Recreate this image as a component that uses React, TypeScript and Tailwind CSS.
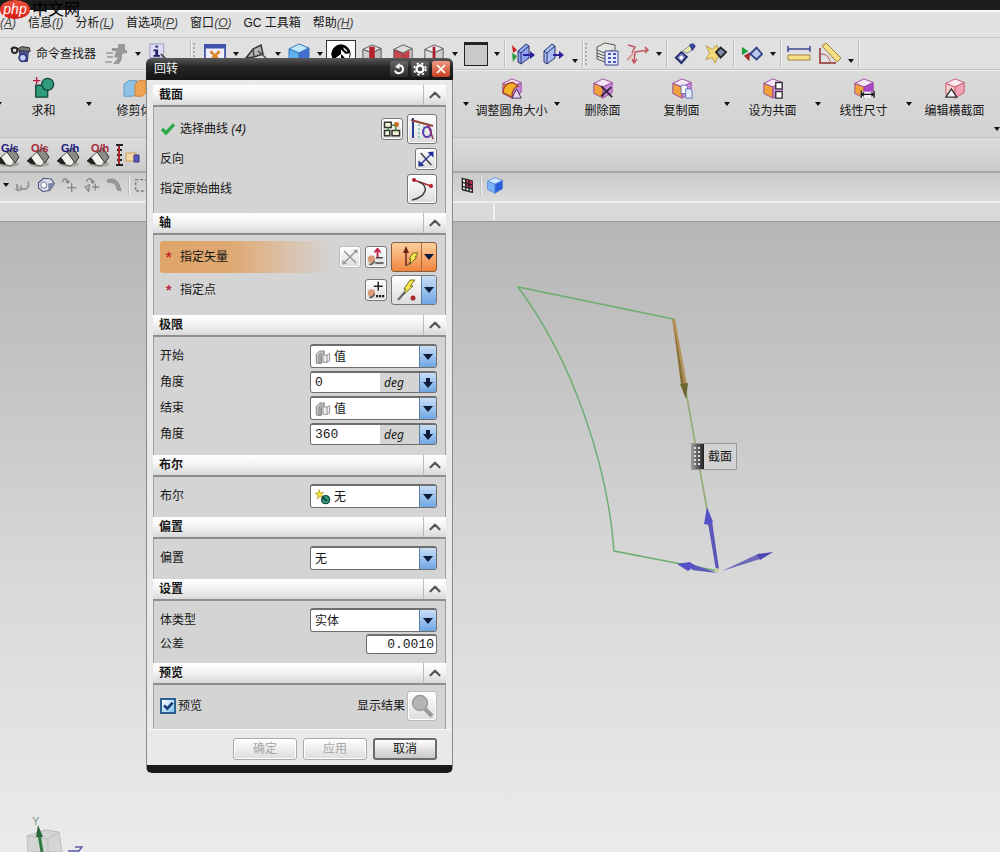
import React, { useState } from 'react';
import clsx from 'clsx';
import { ChevronUp, X } from 'lucide-react';

type Children = { children?: React.ReactNode };

const fonts = 'font-["Liberation_Sans","Noto_Sans_CJK_SC",sans-serif]';
const mono = 'font-["Liberation_Mono","Noto_Sans_CJK_SC",monospace]';

/* ---------- drawings ---------- */

function Svg({ children, className = 'w-[22px] h-[22px]' }: Children & { className?: string }) {
  return (
    <svg viewBox="0 0 24 24" fill="none" aria-hidden="true" className={clsx('shrink-0', className)}>
      {children}
    </svg>
  );
}

interface CubeProps {
  top: string;
  left: string;
  right: string;
  line?: string;
}

function Cube({ top, left, right, line = '#555' }: CubeProps) {
  return (
    <g stroke={line} strokeWidth="1" strokeLinejoin="round">
      <path d="M2 7 12 2 22 6 12 11Z" fill={top} />
      <path d="M2 7 12 11V23L2 18Z" fill={left} />
      <path d="M12 11 22 6V17L12 23Z" fill={right} />
    </g>
  );
}

const Roller = ({ text, color }: { text: string; color: string }) => (
  <svg viewBox="0 0 28 26" aria-hidden="true" className="w-7 h-[26px] shrink-0">
    <ellipse cx="15" cy="22" rx="10" ry="3" fill="#a5a59a" />
    <path d="M3 19 14 9 24 16 17 24 9 22Z" fill="#f2f2ea" stroke="#555" />
    <path d="M13 10 19 6 25 15 21 21Z" fill="#8b8b86" stroke="#333" />
    <path d="M3 19 7 15 12 22H7Z" fill="#222" />
    <text x="7" y="10" fontSize="11" fontWeight="bold" fill={color}>{text}</text>
  </svg>
);

const ValueIcon = () => (
  <Svg className="w-4 h-4">
    <path d="M2 21V8L7 3H14V7L9 9V22Z" fill="#ccc" stroke="#555" />
    <path d="M6 21V9L10 5M10 21V10" stroke="#555" />
    <path d="M12 9H18L22 7V18L18 20H12Z" fill="#eee" stroke="#666" />
    <path d="M18 9V20" stroke="#666" />
  </Svg>
);

const NoneIcon = () => (
  <Svg className="w-4 h-4">
    <path d="M6 1 8 6 13 5 10 9 13 13 7 11 4 15 4 9 0 6 5 6Z" fill="#f3e23c" stroke="#a89c1c" />
    <circle cx="16" cy="16" r="6" fill="#2f9c7b" stroke="#174a3c" strokeWidth="2" />
    <path d="M11 12 18 18" stroke="#123" strokeWidth="2" />
  </Svg>
);

/* ---------- toolbar parts ---------- */

const Tool = ({ label, children }: Children & { label: string }) => (
  <button title={label} className="flex h-7 w-[31px] shrink-0 items-center justify-center">
    {children}
  </button>
);

const SmallTool = ({ label, children }: Children & { label: string }) => (
  <button title={label} className="flex h-6 w-[23px] shrink-0 items-center justify-center">
    {children}
  </button>
);

const Caret = ({ className = 'w-[11px]' }: { className?: string }) => (
  <span className={clsx('flex shrink-0 justify-center', className)}>
    <svg viewBox="0 0 6 4" aria-hidden="true" className="h-1 w-1.5">
      <path d="M0 0H6L3 4Z" fill="#111" />
    </svg>
  </span>
);

const Separator = () => (
  <span className="flex w-[5px] shrink-0 justify-center self-stretch py-0.5">
    <span className="w-0.5 border-l border-[#bdbdbd] bg-[#f1f1f1]" />
  </span>
);

const Grip = () => (
  <span className="h-[22px] w-1.5 shrink-0 border-l-2 border-dotted border-[#aaa]" />
);

const BigTool = ({ label, children }: Children & { label: string }) => (
  <button className="flex w-[79px] shrink-0 flex-col items-center gap-[3px] self-start pt-1.5 whitespace-nowrap">
    {children}
    <span className="leading-[18px]">{label}</span>
  </button>
);

const BigCaret = () => <Caret className="w-3" />;

const menus = [
  ['', 'A'],
  ['信息', 'I'],
  ['分析', 'L'],
  ['首选项', 'P'],
  ['窗口', 'O'],
  ['GC 工具箱', ''],
  ['帮助', 'H'],
];

function MenuBar() {
  return (
    <nav className="flex h-[27px] items-center gap-3 overflow-hidden border-t-2 border-[#f6f6f6] bg-[#e2e2e2] pb-1 whitespace-nowrap">
      {menus.map(([text, key]) => (
        <button key={text + key} className="shrink-0">
          {text}
          {key && <i className="text-[#444]">(<u>{key}</u>)</i>}
        </button>
      ))}
    </nav>
  );
}

function StandardToolbar() {
  return (
    <div className="flex h-[33px] items-center overflow-hidden border-y border-t-[#c8c8c8] border-b-[#c4c4c4] bg-[#e0e0e0]">
      <button className="flex w-[101px] shrink-0 items-center gap-1 pl-2.5 whitespace-nowrap">
        <Svg>
          <path d="M1 6C3 3 7 5 9 6L13 4 21 5 22 9 19 10Z" fill="#777" stroke="#222" />
          <circle cx="5" cy="8" r="3" fill="#ddd" stroke="#222" strokeWidth="2" />
          <path d="M10 9 20 9 19 20 12 20Z" fill="#555b8e" stroke="#292d55" />
          <circle cx="14" cy="16" r="4" fill="#c4cdf2" stroke="#343b84" strokeWidth="2" />
        </Svg>
        命令查找器
      </button>
      <Tool label="重复命令">
        <Svg className="w-6 h-6">
          <path d="M13 2H20V8H22V11L17 12V17L14 22H8L13 16 9 15 11 9H7V6H13Z" fill="#999" />
          <path d="M1 11H8M2 15H8M0 20H7" stroke="#aaa" strokeWidth="2" />
        </Svg>
      </Tool>
      <Caret />
      <Tool label="对象信息">
        <Svg>
          <path d="M2 1H17V16H2Z" fill="#dcdcf6" stroke="#9a9ac4" />
          <path d="M8 3H11V5H8ZM6 7H11V13H13V15H6V13H8V9H6Z" fill="#1d1d62" />
          <path d="M14 12 21 19M15 19 22 22" stroke="#555" strokeWidth="2" />
        </Svg>
      </Tool>
      <span className="w-3.5 shrink-0" />
      <Separator />
      <Grip />
      <Tool label="适合窗口">
        <Svg>
          <path d="M1 2H23V22H1Z" fill="#eef" stroke="#4758a6" strokeWidth="2" />
          <path d="M1 2H23V6H1Z" fill="#3f51b0" />
          <path d="M7 9 17 19M17 9 7 19" stroke="#e08a2c" strokeWidth="3" />
        </Svg>
      </Tool>
      <Caret />
      <Tool label="草图">
        <Svg className="w-6 h-6">
          <path d="M1 16 8 7 16 3 18 12 9 15Z" fill="#b5b5b5" stroke="#333" strokeWidth="1.5" />
          <path d="M8 7 9 15M1 16 12 20 23 17M13 9 21 16" stroke="#444" strokeWidth="1.5" />
        </Svg>
      </Tool>
      <Caret />
      <Tool label="带边着色">
        <Svg className="w-6 h-6"><Cube top="#bfe6fb" left="#5fb3ea" right="#3f6fd0" line="#3b78bd" /></Svg>
      </Tool>
      <Caret />
      <Tool label="渲染样式">
        <span className="flex h-7 w-[30px] items-center justify-center border border-[#333] bg-[#fafafa]">
          <Svg>
            <circle cx="12" cy="12" r="10" fill="#fff" stroke="#000" />
            <path d="M12 2A10 10 0 0 0 4 18L12 12V7L17 12 22 11A10 10 0 0 0 12 2Z" fill="#000" />
            <path d="M12 12 19 19A10 10 0 0 1 12 22Z" fill="#000" />
            <path d="M14 5C17 6 19 8 19 10L16 8Z" fill="#fff" />
          </Svg>
        </span>
      </Tool>
      <Tool label="编辑截面">
        <Svg>
          <Cube top="#ddd" left="#ccc" right="#bbb" />
          <path d="M9 4H15V22H9Z" fill="#b3222a" />
        </Svg>
      </Tool>
      <Tool label="剪切截面">
        <Svg>
          <Cube top="#ddd" left="#c9474f" right="#ccc" />
          <path d="M12 12 19 8V16L12 20Z" fill="#c43c46" />
        </Svg>
      </Tool>
      <Tool label="显示截面">
        <Svg>
          <Cube top="#eee" left="#ddd" right="#ccc" />
          <path d="M12 4V22" stroke="#a81c28" strokeWidth="3" />
        </Svg>
      </Tool>
      <Caret />
      <Tool label="背景颜色">
        <span className="h-6 w-6 border border-t-[3px] border-[#222] bg-[#c9c9c9]" />
      </Tool>
      <Caret />
      <Separator />
      <Tool label="显示和隐藏">
        <Svg className="w-6 h-6">
          <path d="M1 3 6 8 2 11Z" fill="#c22" />
          <path d="M1 11 6 14 2 20Z" fill="#2a9a3c" />
          <path d="M7 9 15 2 18 4V16L10 22 7 20Z" fill="#8fa6ee" stroke="#26336e" />
          <path d="M10 11V22M10 11 18 4M7 9 10 11" stroke="#26336e" />
          <path d="M12 12H19V9L24 13 19 17V14H12Z" fill="#2a249c" />
        </Svg>
      </Tool>
      <Tool label="隐藏">
        <Svg className="w-6 h-6">
          <path d="M2 9 10 2 13 4V16L5 22 2 20Z" fill="#a9bcf3" stroke="#26336e" />
          <path d="M5 11V22M5 11 13 4M2 9 5 11" stroke="#26336e" />
          <path d="M11 12H17V9L22 13 17 17V14H11Z" fill="#2a249c" />
        </Svg>
      </Tool>
      <Caret className="w-[11px] self-end pb-1.5" />
      <Separator />
      <Grip />
      <Tool label="图层设置">
        <Svg className="w-6 h-6">
          <path d="M2 5 10 1 20 3V15L10 20 2 17Z" fill="#e3e9e0" stroke="#555" />
          <path d="M2 8 10 11 18 8M2 11 10 14M2 14 10 17" stroke="#555" />
          <path d="M10 9H23V23H10Z" fill="#e6eaff" stroke="#40498e" />
          <path d="M13 12H16M18 12H21M13 16H16M18 16H21M13 20H16M18 20H21" stroke="#4a57b5" strokeWidth="2" />
        </Svg>
      </Tool>
      <Tool label="WCS">
        <Svg className="w-6 h-6">
          <path d="M2 3 9 5 6 11M9 10 8 20M6 17 8 21 11 17M9 10 22 8M19 5 22 8 19 11" stroke="#c25560" strokeWidth="1.5" />
          <path d="M1 18 7 12" stroke="#d69c92" strokeWidth="2" />
        </Svg>
      </Tool>
      <Caret />
      <Separator />
      <Tool label="编辑对象显示">
        <Svg>
          <path d="M2 16 8 10 14 15 8 22Z" fill="#8990cd" stroke="#222a6a" strokeWidth="2" />
          <circle cx="8" cy="16" r="2" fill="#fff" />
          <path d="M9 9 17 3 21 7 14 11Z" fill="#e9e8b0" stroke="#888" />
          <path d="M17 2C20 0 23 1 23 4L20 8Z" fill="#3a45ab" stroke="#2b377a" />
        </Svg>
      </Tool>
      <Tool label="移动对象">
        <Svg>
          <path d="M1 3 8 7 13 2 14 9 21 12 14 15 11 22 8 16 1 18 5 11Z" fill="#f3d978" stroke="#bd983f" />
          <path d="M12 10 17 5 23 10 17 16Z" fill="#8188a5" stroke="#222" strokeWidth="2" />
        </Svg>
      </Tool>
      <Separator />
      <Tool label="变换">
        <Svg>
          <path d="M1 4 8 9 1 13Z" fill="#209c3c" />
          <path d="M3 14 10 10 9 20Z" fill="#a62b2b" />
          <path d="M10 12 17 5 23 12 17 18Z" fill="#b8c9ef" stroke="#344486" strokeWidth="2" />
        </Svg>
      </Tool>
      <Caret />
      <Separator />
      <Tool label="测量距离">
        <Svg className="w-6 h-6">
          <path d="M1 7H23M1 4V10M23 4V10" stroke="#3b478e" strokeWidth="1.5" />
          <path d="M1 13H23V18H1Z" fill="#f6e184" stroke="#a2823a" />
        </Svg>
      </Tool>
      <Tool label="测量角度">
        <Svg className="w-6 h-6">
          <path d="M2 6V21H18" stroke="#a05a5a" strokeWidth="2" />
          <path d="M3 12C9 12 12 16 12 21" stroke="#b35a5a" />
          <path d="M4 4 8 1 23 16 19 20Z" fill="#f6e184" stroke="#a2823a" />
        </Svg>
      </Tool>
      <Caret className="w-[11px] self-end pb-1.5" />
      <Separator />
    </div>
  );
}

const orangeFace = { top: '#f4e4f5', left: '#f2a23a', right: '#c98be0', line: '#99479c' };

function FeatureToolbar() {
  return (
    <div className="flex h-[67px] items-center overflow-hidden border-t border-[#efefef] bg-linear-to-b from-[#dadada] to-[#d2d2d2]">
      <Caret className="-ml-[7px] w-[11px]" />
      <BigTool label="求和">
        <Svg>
          <path d="M3 9H16V22H3Z" fill="#2f9c7b" stroke="#174a3c" strokeWidth="1.5" />
          <circle cx="16" cy="8" r="6.5" fill="#2f9c7b" stroke="#174a3c" strokeWidth="1.5" />
          <path d="M4 0V8M0 4H8" stroke="#b21f45" strokeWidth="1.5" />
        </Svg>
      </BigTool>
      <BigCaret />
      <BigTool label="修剪体">
        <Svg className="h-[22px] w-7">
          <path d="M0 8 5 4H14V19L9 21H0Z" fill="#8ec2e4" stroke="#5e94bd" />
          <path d="M12 8 16 4H24V17L20 21H12Z" fill="#f1a355" stroke="#c67c38" />
        </Svg>
      </BigTool>
      <span className="w-[286px] shrink-0" />
      <BigCaret />
      <BigTool label="调整圆角大小">
        <Svg>
          <Cube {...orangeFace} />
          <path d="M2 17C3 9 7 6 13 6L19 10C14 11 12 16 12 22Z" fill="#f5b32c" stroke="#a3462b" strokeWidth="1.5" />
          <path d="M17 13 22 23H12Z" fill="#e8d4f2" stroke="#3b2550" />
        </Svg>
      </BigTool>
      <BigCaret />
      <BigTool label="删除面">
        <Svg>
          <Cube {...orangeFace} />
          <path d="M10 10 22 22M21 11 10 21" stroke="#33203a" strokeWidth="2" />
        </Svg>
      </BigTool>
      <BigTool label="复制面">
        <Svg>
          <Cube {...orangeFace} />
          <path d="M11 9H16L18 11V18H11Z" fill="#fff" stroke="#5a6fae" />
          <path d="M16 13H21L23 15V23H16Z" fill="#dfeafc" stroke="#5a6fae" />
        </Svg>
      </BigTool>
      <BigCaret />
      <BigTool label="设为共面">
        <Svg>
          <Cube {...orangeFace} />
          <path d="M15 6H22V13H15ZM15 16H22V23H15Z" fill="#fff" stroke="#333" strokeWidth="1.5" />
        </Svg>
      </BigTool>
      <BigCaret />
      <BigTool label="线性尺寸">
        <Svg>
          <Cube {...orangeFace} right="#a648c8" />
          <path d="M8 16H24V23H8Z" fill="#f2eaf5" />
          <path d="M9 15V23M23 15V23M9 19H23M12 17 9 19 12 21M20 17 23 19 20 21" stroke="#222" strokeWidth="1.5" />
        </Svg>
      </BigTool>
      <BigCaret />
      <BigTool label="编辑横截面">
        <Svg>
          <Cube top="#fbe9ee" left="#fad0c8" right="#f3a3b5" line="#c35674" />
          <path d="M8 13 14 22H2Z" fill="#f5f5ff" stroke="#333" strokeWidth="1.5" />
        </Svg>
      </BigTool>
      <Caret className="ml-auto w-1.5 self-end pb-1.5" />
    </div>
  );
}

function CurveToolbar() {
  return (
    <div className="flex h-[34px] items-center overflow-hidden border-t border-[#c2c2c2] bg-linear-to-b from-[#dcdcdc] to-[#cbcbcb]">
      <div className="-ml-1.5 flex items-center gap-0.5">
        {[['G/s', '#1d1d80'], ['O/s', '#a52a3a'], ['G/h', '#1d1d80'], ['O/h', '#a52a3a']].map(([text, color]) => (
          <button key={text} title={text}>
            <Roller text={text} color={color} />
          </button>
        ))}
        <button title="弹簧">
          <Svg className="h-6 w-7">
            <path d="M0 2H7M0 22H7M1 7H6M1 12H6M1 17H6" stroke="#222" strokeWidth="2" />
            <path d="M3 3V21" stroke="#b3222a" strokeWidth="2" />
            <path d="M10 10H20V18H10Z" fill="#f3d9a4" stroke="#c99c5c" />
            <path d="M18 12H23V19H18Z" fill="#5a5ac0" stroke="#35357e" />
          </Svg>
        </button>
      </div>
    </div>
  );
}

function SelectionToolbar() {
  return (
    <div className="flex h-[30px] items-center overflow-hidden border-t-2 border-[#a6a6a6] bg-linear-to-b from-[#c9c9c9] to-[#dcdcdc] pb-1">
      <Caret />
      <SmallTool label="撤消">
        <Svg className="w-4 h-4"><path d="M3 10V19H9V13M9 18H16L20 14V7M5 14 2 18 6 21" stroke="#999" strokeWidth="3" /></Svg>
      </SmallTool>
      <SmallTool label="体">
        <Svg className="w-[18px] h-[18px]">
          <path d="M2 9 9 3 19 4 23 10 17 19 8 21 2 16Z" fill="#d8dcec" stroke="#50567a" strokeWidth="1.5" />
          <circle cx="9" cy="12" r="4" fill="#fff" stroke="#50567a" />
          <path d="M15 10 22 9V15L15 19Z" fill="#7d84a8" />
        </Svg>
      </SmallTool>
      <SmallTool label="移动">
        <Svg className="w-4 h-4"><path d="M2 8C3 1 10 1 10 8M7 6 10 9 13 6M16 9V23M9 16H23" stroke="#888" strokeWidth="2" /></Svg>
      </SmallTool>
      <SmallTool label="添加">
        <Svg className="w-4 h-4"><path d="M3 7C7 0 13 2 13 8M10 6 13 9 16 6M2 15 8 12 7 21ZM17 10V20M12 15H23" stroke="#888" strokeWidth="2" /></Svg>
      </SmallTool>
      <SmallTool label="扫掠">
        <Svg className="w-4 h-4"><path d="M1 4C11 0 19 7 21 21L15 19C15 12 10 7 1 8Z" fill="#999" stroke="#777" /></Svg>
      </SmallTool>
      <Separator />
      <SmallTool label="矩形选择">
        <Svg className="w-4 h-4"><path d="M1 4H23V21H1Z" stroke="#777" strokeWidth="2" strokeDasharray="4 3" /></Svg>
      </SmallTool>
      <span className="w-[301px] shrink-0" />
      <SmallTool label="栅格">
        <Svg className="w-4 h-4">
          <path d="M5 2 20 6V23L5 19Z" fill="#eee" stroke="#222" strokeWidth="2" />
          <path d="M10 4 20 6V18L10 15Z" fill="#bc2d50" />
          <path d="M10 3V21M15 4V22M5 8 20 12M5 14 20 18" stroke="#222" strokeWidth="2" />
        </Svg>
      </SmallTool>
      <Separator />
      <SmallTool label="着色">
        <Svg className="w-[18px] h-[18px]"><Cube top="#cfe8ff" left="#7fb5f6" right="#2c5ddb" line="#5183d8" /></Svg>
      </SmallTool>
    </div>
  );
}

/* ---------- dialog parts ---------- */

function Section({ title, children }: Children & { title: string }) {
  const [open, setOpen] = useState(true);
  return (
    <section>
      <h2 className="flex h-[22px] items-stretch border-b-2 border-[#8e8e8e] bg-linear-to-b from-white via-[#f4f4f4] via-45% to-[#d9d9d9]">
        <span className="flex-1 self-center pl-1.5 font-bold">{title}</span>
        <button
          aria-label={title}
          onClick={() => setOpen(!open)}
          className="flex w-[23px] items-center justify-center border-l border-[#bbb] text-[#555]"
        >
          <ChevronUp className={clsx('h-[18px] w-[18px]', !open && 'rotate-180')} strokeWidth={3} />
        </button>
      </h2>
      {open && <div className="border-x border-[#a0a0a0] bg-[#d4d4d4] pt-1.5 pr-2 pb-2 pl-1.5">{children}</div>}
    </section>
  );
}

const boxed =
  'flex shrink-0 items-center justify-center rounded-[3px] border bg-linear-to-b from-white to-[#dcdcdc] shadow-[inset_0_0_0_1px_#ffffff]';

const BigBox = ({ label, children }: Children & { label: string }) => (
  <button title={label} className={clsx(boxed, 'h-[30px] w-[30px] border-[#777]')}>{children}</button>
);

const SmallBox = ({ label, disabled, children }: Children & { label: string; disabled?: boolean }) => (
  <button
    title={label}
    disabled={disabled}
    className={clsx(boxed, 'h-[22px] w-[22px]', disabled ? 'border-[#bbb]' : 'border-[#777]')}
  >
    {children}
  </button>
);

const blue = 'flex w-[17px] shrink-0 items-center justify-center border-l border-[#5c7fa8] bg-linear-to-b from-[#c9def6] to-[#6fa6e4]';

const DropMark = () => (
  <svg viewBox="0 0 10 6" aria-hidden="true" className="h-1.5 w-2.5">
    <path d="M0 0H10L5 6Z" fill="#0e1c3c" />
  </svg>
);

interface DropDownProps {
  id: string;
  label: string;
  options: string[];
  icon?: React.ReactNode;
}

function DropDown({ id, label, options, icon }: DropDownProps) {
  return (
    <div className="flex h-[26px] items-center justify-between">
      <label htmlFor={id}>{label}</label>
      <div className="flex h-6 w-[127px] overflow-hidden rounded-[3px] border border-t-2 border-[#6e6e6e] bg-white">
        <div className="flex min-w-0 flex-1 items-center gap-[3px] pl-1">
          {icon}
          <select id={id} className="min-w-0 flex-1 appearance-none bg-transparent outline-none">
            {options.map((option) => (
              <option key={option}>{option}</option>
            ))}
          </select>
        </div>
        <span className={blue}><DropMark /></span>
      </div>
    </div>
  );
}

function AngleField({ id, value }: { id: string; value: string }) {
  return (
    <div className="flex h-[26px] items-center justify-between">
      <label htmlFor={id}>角度</label>
      <div className="flex h-[22px] w-[127px] overflow-hidden rounded-[3px] border border-t-2 border-[#6e6e6e] bg-[#d4d4d4]">
        <input id={id} defaultValue={value} className={clsx('w-[69px] bg-white pl-1 text-[13px] outline-none', mono)} />
        <i className="flex-1 self-center pl-1 font-['Noto_Sans',sans-serif] text-xs leading-4">deg</i>
        <button title="公式" className={blue}>
          <svg viewBox="0 0 10 10" aria-hidden="true" className="h-2.5 w-2.5">
            <path d="M3 0H7V4H10L5 10 0 4H3Z" fill="#0e1c3c" />
          </svg>
        </button>
      </div>
    </div>
  );
}

const titleButton = 'flex h-4 w-[18px] items-center justify-center rounded-[2px] bg-linear-to-b from-[#666] to-[#2c2c2c]';

function RevolveDialog() {
  return (
    <div
      role="dialog"
      aria-label="回转"
      className="absolute top-[58px] left-[146px] w-[307px] rounded-md border-x border-b-8 border-x-[#8a8a8a] border-b-[#1a1a1a] bg-[#e9e9e9]"
    >
      <header className="-mx-px flex h-[22px] items-center gap-[3px] rounded-t-md bg-linear-to-b from-[#5a5a5a] via-[#262626] via-40% to-[#151515] pr-[3px] pl-2 text-[#f0f0f0]">
        <span className="flex-1">回转</span>
        <button title="重置" className={titleButton}>
          <Svg className="h-3 w-3">
            <path d="M4 15C6 23 20 22 20 12 20 7 16 4 12 5" stroke="#fff" strokeWidth="4" />
            <path d="M4 8 13 0V12Z" fill="#fff" />
          </Svg>
        </button>
        <button title="设置" className={titleButton}>
          <Svg className="h-3.5 w-3.5">
            <circle cx="12" cy="12" r="6" stroke="#fff" strokeWidth="4" />
            <circle cx="12" cy="12" r="10" stroke="#fff" strokeWidth="3" strokeDasharray="4 4" />
          </Svg>
        </button>
        <button title="关闭" className="flex h-4 w-[18px] items-center justify-center rounded-[2px] bg-linear-to-b from-[#f0977f] to-[#c33e22] text-white">
          <X className="h-3.5 w-3.5" strokeWidth={3} />
        </button>
      </header>

      <div className="px-1.5 pt-[5px]">
        <Section title="截面">
          <div className="flex h-8 items-center gap-1">
            <Svg className="h-4 w-4">
              <path d="M3 12 9 18 21 5" stroke="#2faa4a" strokeWidth="5" />
            </Svg>
            <span className="flex-1">选择曲线 <i>(4)</i></span>
            <SmallBox label="绘制截面">
              <Svg className="h-[18px] w-[18px]">
                <path d="M2 3H11V10H2ZM2 14H9V21H2ZM12 14H22V21H12Z" fill="#f4f4d8" stroke="#333" strokeWidth="2" />
                <path d="M15 3H21V9H15Z" fill="#d2691e" />
                <path d="M11 7H16M7 10V14M17 9V14" stroke="#3a8a3a" strokeWidth="2" />
              </Svg>
            </SmallBox>
            <BigBox label="曲线">
              <Svg className="h-6 w-6">
                <path d="M3 1V21" stroke="#273896" strokeWidth="2" />
                <path d="M9 7V21M14 9V21" stroke="#6cc4b2" strokeWidth="1.5" strokeDasharray="2 2" />
                <path d="M1 3 23 9" stroke="#944035" strokeWidth="2" />
                <ellipse cx="17" cy="15" rx="4" ry="5" stroke="#5b3db0" strokeWidth="2" />
                <path d="M18 7 23 22" stroke="#8f2d65" strokeWidth="1.5" />
              </Svg>
            </BigBox>
          </div>
          <div className="flex h-7 items-center justify-between">
            <span>反向</span>
            <SmallBox label="反向">
              <Svg className="h-[18px] w-[18px]">
                <path d="M5 4 19 20" stroke="#444" strokeWidth="2" />
                <path d="M4 20 20 4" stroke="#28369c" strokeWidth="2" />
                <path d="M22 2V10L14 3ZM2 22V14L10 21Z" fill="#1f2d96" />
              </Svg>
            </SmallBox>
          </div>
          <div className="flex h-8 items-center justify-between">
            <span>指定原始曲线</span>
            <BigBox label="指定原始曲线">
              <Svg className="h-6 w-6">
                <path d="M4 3 21 9" stroke="#b32a35" strokeWidth="1.5" />
                <circle cx="4" cy="3" r="2" fill="#b31f2a" />
                <circle cx="21" cy="9" r="2" fill="#b31f2a" />
                <path d="M9 5C20 9 16 20 2 23" stroke="#444" strokeWidth="1.5" />
              </Svg>
            </BigBox>
          </div>
        </Section>

        <Section title="轴">
          <div className="flex h-8 items-center gap-1 rounded-[3px] bg-linear-to-r from-[#dfa468] via-[#dfa973] via-26% to-[#d4d4d4] to-62% pl-1.5">
            <b className="w-2.5 text-sm text-[#c8281c]">*</b>
            <span className="flex-1">指定矢量</span>
            <SmallBox label="反向" disabled>
              <Svg className="h-[18px] w-[18px]">
                <path d="M4 4 20 20M4 20 20 4" stroke="#999" strokeWidth="2" />
                <path d="M22 2V8L16 3ZM2 22V16L8 21Z" fill="#999" />
              </Svg>
            </SmallBox>
            <SmallBox label="矢量构造器">
              <Svg className="h-[18px] w-[18px]">
                <circle cx="6" cy="15" r="5" fill="#d99a7a" />
                <path d="M3 22C7 22 9 20 10 17" stroke="#555" strokeWidth="2" />
                <path d="M14 13V2M10 6 14 1 18 6" stroke="#c22747" strokeWidth="2.5" />
                <path d="M12 13H21M11 20H22" stroke="#444" strokeWidth="2" />
              </Svg>
            </SmallBox>
            <div className="flex h-[30px] w-[46px] overflow-hidden rounded-[3px] border border-[#8a5c3a] bg-linear-to-b from-[#fbcf9c] to-[#f0853c]">
              <button title="自动判断的矢量" className="flex flex-1 items-center justify-center">
                <Svg className="h-6 w-6">
                  <path d="M11 21V6" stroke="#6a2516" strokeWidth="1.5" />
                  <path d="M11 1 14 8H8Z" fill="#6a2516" />
                  <path d="M18 8H23L20 12H22L14 20 16 14H14Z" fill="#f5ec4c" stroke="#7a6a20" />
                  <path d="M11 21 16 17" stroke="#444" />
                </Svg>
              </button>
              <button title="矢量类型" className="flex w-[15px] items-center justify-center border-l border-[#a8683c]"><DropMark /></button>
            </div>
          </div>
          <div className="flex h-[34px] items-center gap-1 pl-1.5">
            <b className="w-2.5 text-sm text-[#c01f3c]">*</b>
            <span className="flex-1">指定点</span>
            <SmallBox label="点构造器">
              <Svg className="h-[18px] w-[18px]">
                <circle cx="6" cy="16" r="5" fill="#d99a7a" />
                <path d="M3 22C7 22 9 20 10 17" stroke="#555" strokeWidth="2" />
                <path d="M15 1V13M9 7H21" stroke="#222" strokeWidth="2" />
                <path d="M12 20H23" stroke="#222" strokeWidth="3" strokeDasharray="3 1" />
              </Svg>
            </SmallBox>
            <div className="flex h-[30px] w-[46px] overflow-hidden rounded-[3px] border border-[#777] bg-linear-to-b from-white to-[#dcdcdc]">
              <button title="自动判断的点" className="flex flex-1 items-center justify-center">
                <Svg className="h-6 w-6">
                  <path d="M15 2H20L15 8H18L7 18 11 11H9Z" fill="#f5ec4c" stroke="#7a6a20" />
                  <path d="M3 22 10 14" stroke="#666" strokeWidth="2" />
                  <circle cx="18" cy="20" r="2.5" fill="#a52a2a" />
                </Svg>
              </button>
              <button title="点类型" className="flex w-[15px] items-center justify-center border-l border-[#5c7fa8] bg-linear-to-b from-[#c9def6] to-[#6fa6e4]"><DropMark /></button>
            </div>
          </div>
        </Section>

        <Section title="极限">
          <DropDown id="start" label="开始" options={['值', '直至选定对象']} icon={<ValueIcon />} />
          <AngleField id="start-angle" value="0" />
          <DropDown id="end" label="结束" options={['值', '直至选定对象']} icon={<ValueIcon />} />
          <AngleField id="end-angle" value="360" />
        </Section>

        <Section title="布尔">
          <DropDown id="boolean" label="布尔" options={['无', '求和', '求差', '求交']} icon={<NoneIcon />} />
        </Section>

        <Section title="偏置">
          <DropDown id="offset" label="偏置" options={['无', '两侧']} />
        </Section>

        <Section title="设置">
          <DropDown id="body-type" label="体类型" options={['实体', '片体']} />
          <div className="flex h-[22px] items-center justify-between">
            <label htmlFor="tolerance">公差</label>
            <input
              id="tolerance"
              defaultValue="0.0010"
              className={clsx('h-5 w-[71px] rounded-[3px] border border-t-2 border-[#6e6e6e] bg-white pr-0.5 text-right text-[13px] outline-none', mono)}
            />
          </div>
        </Section>

        <Section title="预览">
          <div className="flex h-[30px] items-center justify-between">
            <label className="flex items-center gap-0.5">
              <span className="grid h-4 w-4">
                <input
                  type="checkbox"
                  defaultChecked
                  className="peer col-start-1 row-start-1 h-4 w-4 appearance-none border-2 border-[#2c5f92] bg-linear-to-br from-white to-[#7cc4ee]"
                />
                <Svg className="pointer-events-none invisible col-start-1 row-start-1 h-4 w-4 peer-checked:visible">
                  <path d="M6 11 11 16 19 7" stroke="#173a78" strokeWidth="4" />
                </Svg>
              </span>
              预览
            </label>
            <span className="flex items-center gap-0.5">
              显示结果
              <button title="显示结果" className={clsx(boxed, 'h-[30px] w-[30px] border-[#bbb]')}>
                <Svg className="h-6 w-6">
                  <path d="M15 15 22 22" stroke="#999" strokeWidth="4" />
                  <circle cx="10" cy="9" r="7.5" fill="#b5b5b5" stroke="#9b9b9b" strokeWidth="1.5" />
                </Svg>
              </button>
            </span>
          </div>
        </Section>
      </div>

      <footer className="flex justify-end gap-1.5 border-t border-[#f8f8f8] px-[15px] pt-2 pb-[5px]">
        <button disabled className={clsx(boxed, 'h-[22px] w-16 border-[#aaa] text-[#a5a5a5]')}>确定</button>
        <button disabled className={clsx(boxed, 'h-[22px] w-16 border-[#aaa] text-[#a5a5a5]')}>应用</button>
        <button className="flex h-[22px] w-16 items-center justify-center rounded-[3px] border-2 border-[#6a6a6a] bg-linear-to-b from-white to-[#c9c9c9]">取消</button>
      </footer>
    </div>
  );
}

/* ---------- graphics window ---------- */

function Viewport() {
  return (
    <main className="relative flex-1 overflow-hidden border-t border-[#999] bg-linear-to-b from-[#b6b6b6] via-[#d9d9d9] via-58% to-[#ebebeb]">
      <svg viewBox="500 270 300 320" fill="none" aria-hidden="true" className="absolute top-12 left-[500px] h-[320px] w-[300px]">
        <path d="M718 571 614 551C608 468 574 362 518 287L673 319 718 571" stroke="#6fae72" strokeWidth="1.5" />
        <path d="M687 397 709 521" stroke="#a8a878" />
        <path d="M672 319H675L687 384H681Z" fill="#b59058" />
        <path d="M673 319 681 384H684Z" fill="#80703a" />
        <path d="M680 384 688 383 686 399Z" fill="#6e6430" />
        <path d="M716 570 708 523 712 521 719 569Z" fill="#5b56b8" />
        <path d="M704 524 707 507 713 522 709 525Z" fill="#5650c8" />
        <path d="M717 573 692 570V564Z" fill="#5b56b8" />
        <path d="M677 564 690 562 695 566 688 571Z" fill="#5650c8" />
        <path d="M722 571 758 554 760 559Z" fill="#6f6abb" />
        <path d="M773 552 757 554 760 560Z" fill="#4b46b6" />
        <circle cx="717" cy="570" r="2" fill="#cfd09a" />
      </svg>
      <div className="absolute top-[221px] left-[691px] flex h-[27px] items-stretch border border-[#999] bg-[#d2d2d2]">
        <svg viewBox="0 0 12 25" aria-hidden="true" className="h-[25px] w-3 bg-linear-to-r from-[#999] to-[#222]">
          <path d="M3 3V23M7 3V23" stroke="#ddd" strokeWidth="2" strokeDasharray="2 2" />
        </svg>
        <span className="self-center px-1">截面</span>
      </div>
      <svg viewBox="0 0 100 40" fill="none" aria-hidden="true" className="absolute bottom-0 left-0 h-10 w-[100px]">
        <path d="M27 24 45 18 59 20 62 40H28Z" fill="#d4d6d4" stroke="#bcbcbc" />
        <path d="M27 24 48 27 59 20M48 27V40" stroke="#bcbcbc" />
        <path d="M42 40 39 22" stroke="#2e7a45" strokeWidth="3" />
        <path d="M38 13 43 25H36Z" fill="#25663a" />
        <text x="32" y="13" fontSize="11" fill="#7d9c86">Y</text>
        <path d="M68 39H79M75 35 82 35 78 40" stroke="#5a5fa8" strokeWidth="1.5" />
      </svg>
    </main>
  );
}

export default function App() {
  return (
    <div className={clsx('relative flex min-h-screen flex-col overflow-hidden text-xs text-[#161616]', fonts)}>
      <div className="h-2.5 bg-[#1c1c1c]" />
      <MenuBar />
      <StandardToolbar />
      <FeatureToolbar />
      <CurveToolbar />
      <SelectionToolbar />
      <div className="flex h-5 border-t-2 border-[#ececec] bg-[#d9d9d9]">
        <div className="w-[495px] border-r-2 border-[#f0f0f0]" />
      </div>
      <Viewport />
      <RevolveDialog />

      <div className="absolute top-0 left-0 flex items-start gap-0.5">
        <span className="flex h-[19px] w-[30px] items-center justify-center rounded-[50%] bg-linear-to-b from-[#f0503c] to-[#d91414] pb-0.5 text-sm text-white italic">
          php
        </span>
        <span className="text-base leading-5 text-black">中文网</span>
      </div>
    </div>
  );
}
